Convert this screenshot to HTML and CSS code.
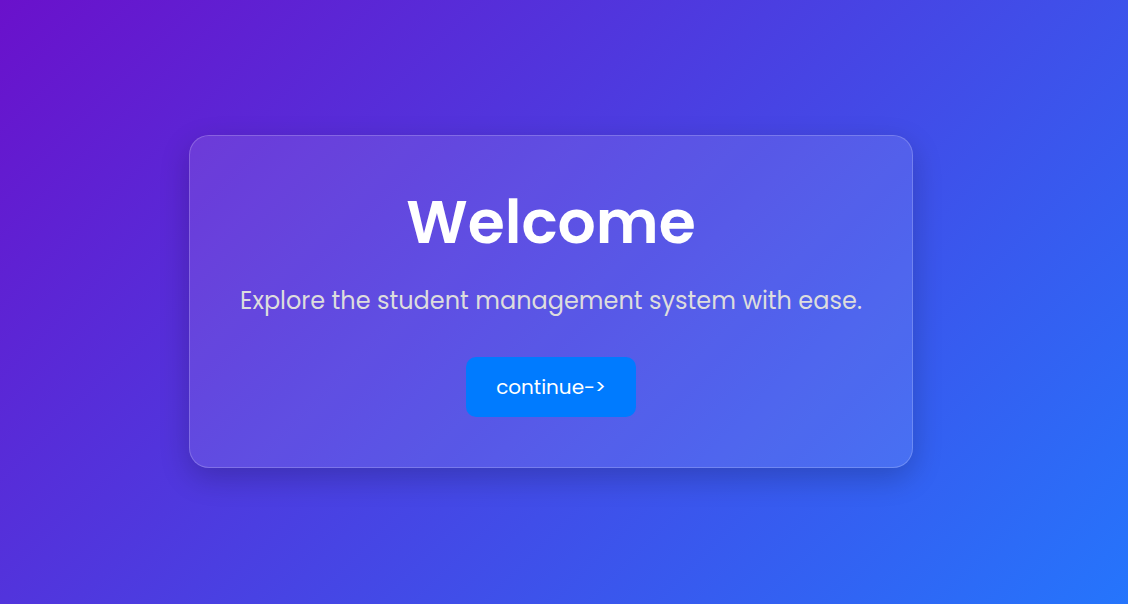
FILE: index.html
```html
<!DOCTYPE html>
<html lang="en">
<head>
<meta charset="utf-8">
<title>Welcome</title>
<link rel="stylesheet" href="styles.css">
</head>
<body>
<main class="stage">
  <section class="card">
    <h1 class="title">Welcome</h1>
    <p class="subtitle">Explore the student management system with ease.</p>
    <button class="btn">continue-&gt;</button>
  </section>
</main>
</body>
</html>
```

FILE: styles.css
```css
* { box-sizing: border-box; }
html, body { margin: 0; height: 100%; }
body {
  font-family: "Poppins", "Inter", "Noto Sans", sans-serif;
  background: linear-gradient(135deg, #6a11cb 0%, #2575fc 100%);
  color: #fff;
}
.stage {
  height: 100vh;
  display: flex;
  align-items: center;
  justify-content: center;
  padding-right: 26px;
}
.card {
  width: 724px;
  height: 333px;
  padding: 50px 40px;
  display: flex;
  flex-direction: column;
  align-items: center;
  text-align: center;
  background: rgba(255, 255, 255, 0.1);
  border: 1px solid rgba(255, 255, 255, 0.2);
  border-radius: 20px;
  box-shadow: 0 10px 30px rgba(0, 0, 0, 0.2);
  transform: translateY(-1px);
}
.card > * { flex-shrink: 0; }
.title {
  margin: 0;
  font-size: 60px;
  font-weight: 600;
  line-height: 72px;
}
.subtitle {
  margin: 26px 0 40px;
  font-size: 24px;
  line-height: 1.4;
  color: #ddd;
}
.btn {
  width: 170px;
  height: 60px;
  border: none;
  border-radius: 10px;
  background: #007bff;
  color: #fff;
  font-family: inherit;
  font-size: 20px;
}
```
